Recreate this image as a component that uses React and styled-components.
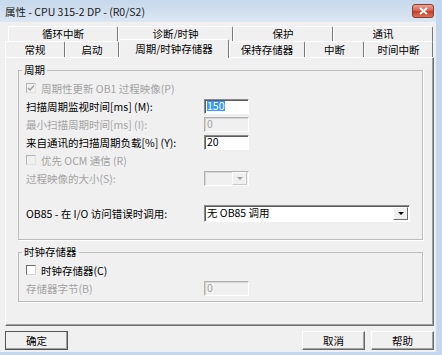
import React from "react";
import styled, { createGlobalStyle } from "styled-components";

const GlobalStyle = createGlobalStyle`
  html, body {
    margin: 0;
    padding: 0;
    background: #f0f0f0;
  }
  body {
    font-family: "Noto Sans CJK SC", "Noto Sans", sans-serif;
    font-size: 10.5px;
    color: #000;
  }
`;

const Window = styled.div`
  width: 442px;
  height: 355px;
  box-sizing: border-box;
  display: flex;
  flex-direction: column;
  background: #f0f0f0;
  border-right: 6px solid #c3d8ef;
  border-bottom: 3px solid #c3d8ef;
  overflow: hidden;
`;

const TitleBar = styled.div`
  height: 22px;
  flex: none;
  display: flex;
  align-items: center;
  justify-content: space-between;
  padding: 0 2px 0 5px;
  background: linear-gradient(#c6d8ec, #dbe6f2);
  font-size: 10.5px;
  color: #1a1a1a;
`;

const CloseButton = styled.div`
  width: 20px;
  height: 12px;
  display: flex;
  align-items: center;
  justify-content: center;
  border: 1px solid #8c3b2c;
  border-radius: 3px;
  background: linear-gradient(#eaa594, #d2604a 50%, #c13d26 51%, #d9735d);
`;

const Body = styled.div`
  flex: 1;
  display: flex;
  flex-direction: column;
  padding: 4px 2px 2px 5px;
`;

const TabRow = styled.div`
  display: flex;
  height: ${({ $h }) => $h}px;
  padding-left: ${({ $indent }) => $indent || 0}px;
`;

const Tab = styled.div`
  box-sizing: border-box;
  width: ${({ $w }) => $w}px;
  height: ${({ $active }) => ($active ? 19 : 16)}px;
  margin-top: ${({ $active }) => ($active ? -2 : 0)}px;
  display: flex;
  align-items: ${({ $back }) => ($back ? "flex-start" : "center")};
  justify-content: center;
  padding-top: ${({ $back }) => ($back ? 1 : 0)}px;
  padding-bottom: ${({ $active }) => ($active ? 1 : 0)}px;
  line-height: 12px;
  background: #f0f0f0;
  border-top: 1px solid #fff;
  border-left: 1px solid #fff;
  border-right: 1px solid #7a7a7a;
  border-radius: 2px 2px 0 0;
  position: ${({ $active }) => ($active ? "relative" : "static")};
  z-index: ${({ $active }) => ($active ? 1 : "auto")};
  white-space: nowrap;
`;

const Panel = styled.div`
  box-sizing: border-box;
  height: 269px;
  padding: 5px 10px 0 12px;
  border-top: 1px solid #fff;
  border-left: 1px solid #fff;
  border-right: 1px solid #6e6e6e;
  border-bottom: 1px solid #6e6e6e;
  box-shadow: inset -1px -1px 0 #a0a0a0;
`;

const Group = styled.fieldset`
  margin: ${({ $mt }) => $mt || 0}px 0 0 0;
  padding: 2px 0 ${({ $pb }) => $pb}px 7px;
  border: 1px solid #bcbcbc;
  box-shadow: 1px 1px 0 #fff;
  min-width: 0;
`;

const Legend = styled.legend`
  margin-left: -4px;
  padding: 0 2px;
  line-height: 14px;
  height: 14px;
`;

const Row = styled.div`
  display: grid;
  grid-template-columns: 178px auto;
  align-items: center;
  height: 18px;
  margin-top: ${({ $mt }) => $mt || 0}px;
  color: ${({ $disabled }) => ($disabled ? "#a3a3a3" : "#000")};
  white-space: nowrap;
`;

const CheckLine = styled.div`
  display: flex;
  align-items: center;
  gap: 5px;
`;

const Box = styled.span`
  box-sizing: border-box;
  width: 10px;
  height: 10px;
  display: flex;
  align-items: center;
  justify-content: center;
  background: ${({ $disabled }) => ($disabled ? "#f0f0f0" : "#fff")};
  border-top: 1px solid ${({ $disabled }) => ($disabled ? "#b4b4b4" : "#6d6d6d")};
  border-left: 1px solid ${({ $disabled }) => ($disabled ? "#b4b4b4" : "#6d6d6d")};
  border-right: 1px solid ${({ $disabled }) => ($disabled ? "#e2e2e2" : "#d4d4d4")};
  border-bottom: 1px solid ${({ $disabled }) => ($disabled ? "#e2e2e2" : "#d4d4d4")};
`;

const TextBox = styled.div`
  box-sizing: border-box;
  width: ${({ $w }) => $w || 45}px;
  height: ${({ $h }) => $h || 15}px;
  display: flex;
  align-items: center;
  padding-left: 2px;
  background: ${({ $disabled }) => ($disabled ? "#f0f0f0" : "#fff")};
  color: ${({ $disabled }) => ($disabled ? "#a3a3a3" : "#000")};
  border-top: 1px solid ${({ $disabled }) => ($disabled ? "#b0b0b0" : "#8a8a8a")};
  border-left: 1px solid ${({ $disabled }) => ($disabled ? "#b0b0b0" : "#8a8a8a")};
  border-right: 1px solid #fff;
  border-bottom: 1px solid #fff;
  box-shadow: inset 1px 1px 0 ${({ $disabled }) => ($disabled ? "#d6d6d6" : "#5c5c5c")};
  line-height: 1;
`;

const Selected = styled.span`
  background: #3399ff;
  color: #fff;
  padding: 0 1px 0 0;
`;

const Combo = styled(TextBox)`
  justify-content: space-between;
  padding-right: 1px;
`;

const DropButton = styled.span`
  box-sizing: border-box;
  width: 15px;
  height: 13px;
  display: flex;
  align-items: center;
  justify-content: center;
  background: #f0f0f0;
  border-top: 1px solid #fff;
  border-left: 1px solid #fff;
  border-right: 1px solid ${({ $disabled }) => ($disabled ? "#c8c8c8" : "#6d6d6d")};
  border-bottom: 1px solid ${({ $disabled }) => ($disabled ? "#c8c8c8" : "#6d6d6d")};
`;

const Arrow = styled.span`
  width: 0;
  height: 0;
  border-left: 3px solid transparent;
  border-right: 3px solid transparent;
  border-top: 3px solid ${({ $disabled }) => ($disabled ? "#a0a0a0" : "#000")};
`;

const ButtonRow = styled.div`
  display: flex;
  gap: 6px;
  margin-top: 5px;
`;

const Spacer = styled.div`
  flex: 1;
`;

const Button = styled.div`
  box-sizing: border-box;
  width: 63px;
  height: 19px;
  display: flex;
  align-items: center;
  justify-content: center;
  background: #f0f0f0;
  border-top: 1px solid #fff;
  border-left: 1px solid #fff;
  border-right: 1px solid ${({ $default }) => ($default ? "#2a2a2a" : "#6a6a6a")};
  border-bottom: 1px solid ${({ $default }) => ($default ? "#2a2a2a" : "#6a6a6a")};
  box-shadow: inset -1px -1px 0 #a0a0a0;
  outline: ${({ $default }) => ($default ? "1px solid #555" : "none")};
  outline-offset: -1px;
`;

const backTabs = [
  ["循环中断", 110],
  ["诊断/时钟", 115],
  ["保护", 100],
  ["通讯", 100],
];

const frontTabs = [
  ["常规", 60],
  ["启动", 54],
  ["周期/时钟存储器", 110, true],
  ["保持存储器", 76],
  ["中断", 59],
  ["时间中断", 69],
];

const Check = ({ checked, disabled, children }) => (
  <CheckLine>
    <Box $disabled={disabled}>
      {checked && (
        <svg width="8" height="8" viewBox="0 0 8 8">
          <path d="M1 4 L3 6 L7 1.5" fill="none" stroke="#a0a0a0" strokeWidth="1.4" />
        </svg>
      )}
    </Box>
    <span>{children}</span>
  </CheckLine>
);

export default function App() {
  return (
    <>
      <GlobalStyle />
      <Window>
        <TitleBar>
          <span>属性 - CPU 315-2 DP - (R0/S2)</span>
          <CloseButton>
            <svg width="9" height="8" viewBox="0 0 9 8">
              <path d="M1 1 L8 7 M8 1 L1 7" stroke="#fff" strokeWidth="1.8" />
            </svg>
          </CloseButton>
        </TitleBar>
        <Body>
          <TabRow $h={15} $indent={3}>
            {backTabs.map(([t, w]) => (
              <Tab key={t} $w={w} $back>{t}</Tab>
            ))}
          </TabRow>
          <TabRow $h={16}>
            {frontTabs.map(([t, w, a]) => (
              <Tab key={t} $w={w} $active={a}>{t}</Tab>
            ))}
          </TabRow>
          <Panel>
            <Group $pb={17}>
              <Legend>周期</Legend>
              <Row $disabled>
                <Check checked disabled>周期性更新 OB1 过程映像(P)</Check>
              </Row>
              <Row>
                <span>扫描周期监视时间[ms] (M):</span>
                <TextBox><Selected>150</Selected></TextBox>
              </Row>
              <Row $disabled>
                <span>最小扫描周期时间[ms] (I):</span>
                <TextBox $disabled>0</TextBox>
              </Row>
              <Row>
                <span>来自通讯的扫描周期负载[%] (Y):</span>
                <TextBox>20</TextBox>
              </Row>
              <Row $disabled>
                <Check disabled>优先 OCM 通信 (R)</Check>
              </Row>
              <Row $disabled>
                <span>过程映像的大小(S):</span>
                <Combo $disabled>
                  <span />
                  <DropButton $disabled><Arrow $disabled /></DropButton>
                </Combo>
              </Row>
              <Row $mt={17}>
                <span>OB85 - 在 I/O 访问错误时调用:</span>
                <Combo $w={206} $h={17}>
                  <span>无 OB85 调用</span>
                  <DropButton><Arrow /></DropButton>
                </Combo>
              </Row>
            </Group>
            <Group $mt={5} $pb={4}>
              <Legend>时钟存储器</Legend>
              <Row>
                <Check>时钟存储器(C)</Check>
              </Row>
              <Row $disabled>
                <span>存储器字节(B)</span>
                <TextBox $disabled>0</TextBox>
              </Row>
            </Group>
          </Panel>
          <ButtonRow>
            <Button $default>确定</Button>
            <Spacer />
            <Button>取消</Button>
            <Button>帮助</Button>
          </ButtonRow>
        </Body>
      </Window>
    </>
  );
}
